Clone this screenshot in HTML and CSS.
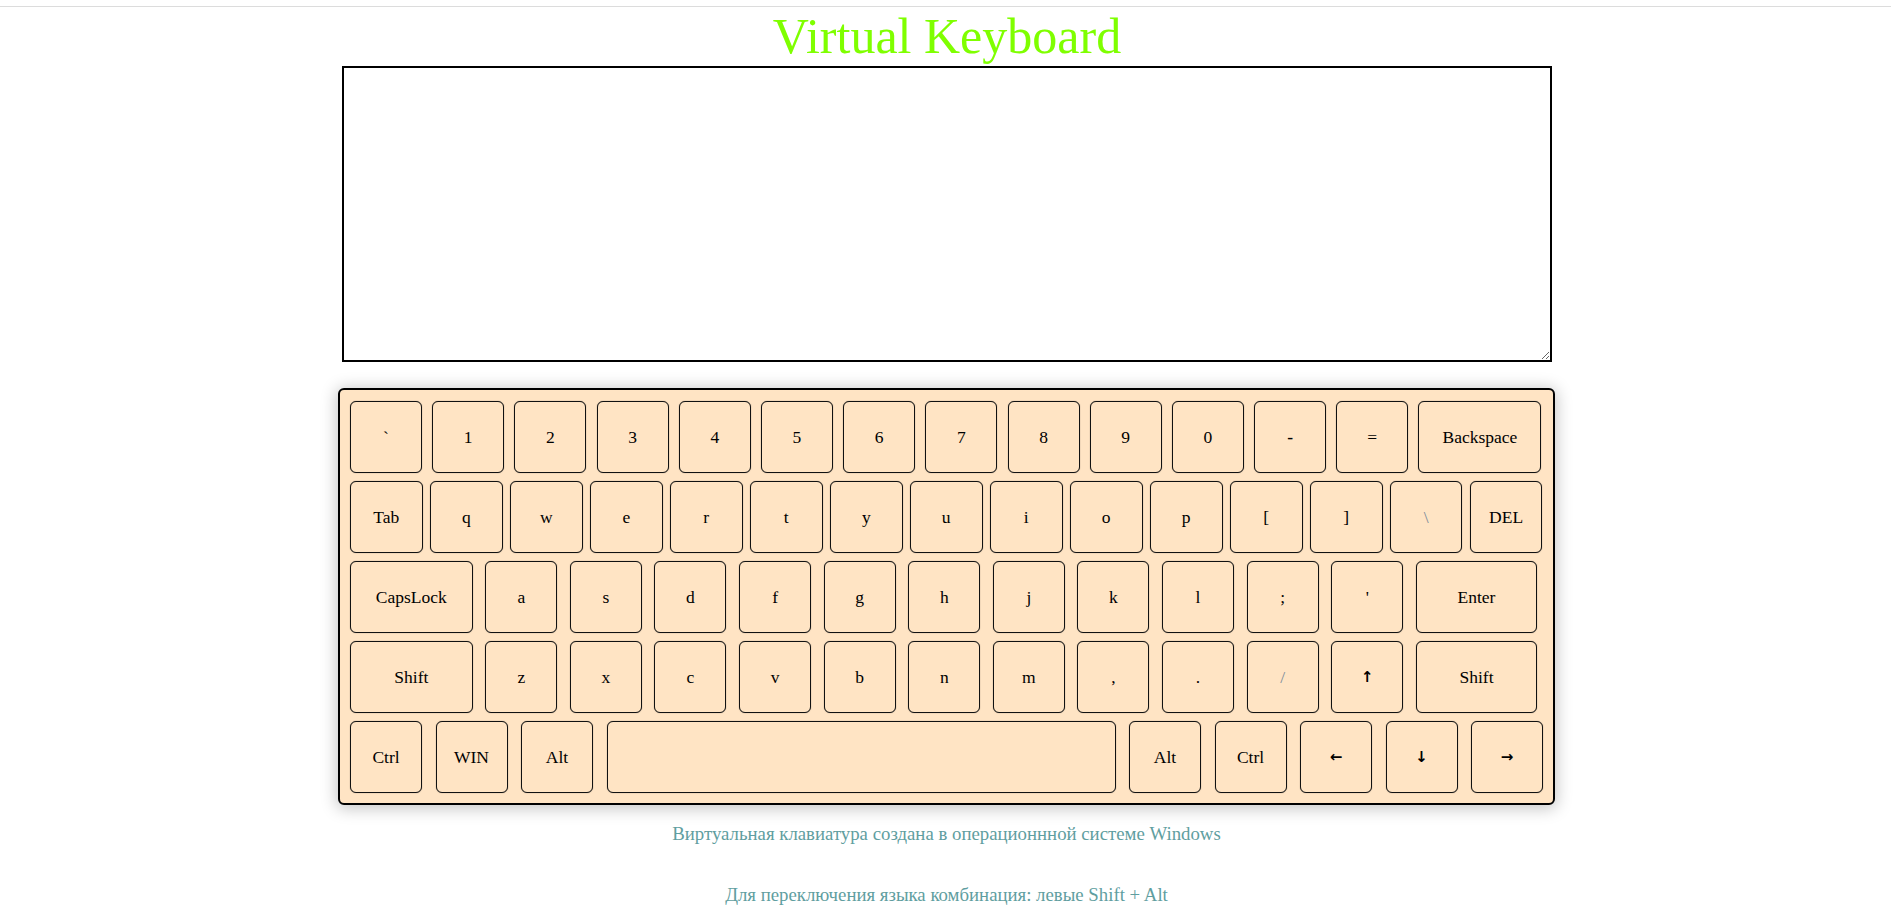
FILE: index.html
```html
<!DOCTYPE html>
<html lang="ru">
<head>
<meta charset="utf-8">
<title>Virtual Keyboard</title>
<link rel="stylesheet" href="styles.css">
</head>
<body>
<div class="topbar"></div>
<main class="page">
  <h1 class="title">Virtual Keyboard</h1>
  <textarea class="output"></textarea>
  <div class="keyboard">
    <div class="row row1">
      <div class="key">`</div>
      <div class="key">1</div>
      <div class="key">2</div>
      <div class="key">3</div>
      <div class="key">4</div>
      <div class="key">5</div>
      <div class="key">6</div>
      <div class="key">7</div>
      <div class="key">8</div>
      <div class="key">9</div>
      <div class="key">0</div>
      <div class="key bold">-</div>
      <div class="key">=</div>
      <div class="key wide">Backspace</div>
    </div>
    <div class="row row2">
      <div class="key">Tab</div>
      <div class="key">q</div>
      <div class="key">w</div>
      <div class="key">e</div>
      <div class="key">r</div>
      <div class="key">t</div>
      <div class="key">y</div>
      <div class="key">u</div>
      <div class="key">i</div>
      <div class="key">o</div>
      <div class="key">p</div>
      <div class="key">[</div>
      <div class="key">]</div>
      <div class="key dim">\</div>
      <div class="key">DEL</div>
    </div>
    <div class="row row3">
      <div class="key wide">CapsLock</div>
      <div class="key">a</div>
      <div class="key">s</div>
      <div class="key">d</div>
      <div class="key">f</div>
      <div class="key">g</div>
      <div class="key">h</div>
      <div class="key">j</div>
      <div class="key">k</div>
      <div class="key">l</div>
      <div class="key">;</div>
      <div class="key">'</div>
      <div class="key enter">Enter</div>
    </div>
    <div class="row row4">
      <div class="key wide">Shift</div>
      <div class="key">z</div>
      <div class="key">x</div>
      <div class="key">c</div>
      <div class="key">v</div>
      <div class="key">b</div>
      <div class="key">n</div>
      <div class="key">m</div>
      <div class="key">,</div>
      <div class="key">.</div>
      <div class="key dim">/</div>
      <div class="key arrow">↑</div>
      <div class="key enter">Shift</div>
    </div>
    <div class="row row5">
      <div class="key">Ctrl</div>
      <div class="key">WIN</div>
      <div class="key">Alt</div>
      <div class="key space"></div>
      <div class="key">Alt</div>
      <div class="key">Ctrl</div>
      <div class="key arrow">←</div>
      <div class="key arrow">↓</div>
      <div class="key arrow">→</div>
    </div>
  </div>
  <p class="note note1">Виртуальная клавиатура создана в операционнной системе Windows</p>
  <p class="note note2">Для переключения языка комбинация: левые Shift + Alt</p>
</main>
</body>
</html>
```

FILE: styles.css
```css
html, body {
  margin: 0;
  padding: 0;
  background: #fff;
}

body {
  font-family: "Liberation Serif", "Times New Roman", serif;
  color: #000;
}

.topbar {
  height: 6px;
  border-bottom: 1px solid #dcdcdc;
}

.page {
  display: flex;
  flex-direction: column;
  align-items: center;
  padding-left: 2px;
}

.title {
  margin: 0 0 0 1px;
  font-size: 50px;
  font-weight: normal;
  line-height: 59px;
  color: #7fff00;
}

.output {
  box-sizing: border-box;
  width: 1210px;
  height: 296px;
  margin: 0 0 26px 1px;
  border: 2px solid #000;
  background: #fff;
  padding: 2px;
  font-family: "Liberation Mono", monospace;
  font-size: 13px;
}

.keyboard {
  box-sizing: border-box;
  width: 1217px;
  padding: 11px 10px 10px 10px;
  border: 2px solid #000;
  border-radius: 6px;
  background: #ffe4c4;
  box-shadow: 0 2px 16px 2px rgba(0, 0, 0, 0.22);
  display: flex;
  flex-direction: column;
  gap: 8px;
}

.row {
  display: flex;
}

.key {
  box-sizing: border-box;
  width: 72px;
  height: 72px;
  flex: none;
  display: flex;
  align-items: center;
  justify-content: center;
  border: 1px solid #111;
  border-radius: 6px;
  background: #ffe4c4;
  font-size: 17.5px;
  color: #000;
  box-shadow: 0 0 1px rgba(0, 0, 0, 0.55);
}

.row1 { gap: 10.2px; }
.row1 .wide { width: 123px; }

.row2 { gap: 7.3px; }
.row2 .key { width: 72.7px; }

.row3, .row4 { gap: 12.6px; }
.row3 .wide, .row4 .wide { width: 122.7px; }
.row3 .enter, .row4 .enter { width: 121.4px; }

.row5 { gap: 13.5px; }
.row5 .space { width: 509px; }

.dim {
  color: #7a8a99;
}

.bold {
  font-weight: bold;
}

.arrow {
  font-family: "DejaVu Sans", sans-serif;
  font-size: 15px;
  font-weight: bold;
}

.note {
  margin: 0;
  font-size: 18.8px;
  line-height: 21px;
  color: #5f9ea0;
}

.note1 {
  margin-top: 18px;
}

.note2 {
  margin-top: 40px;
}
```
